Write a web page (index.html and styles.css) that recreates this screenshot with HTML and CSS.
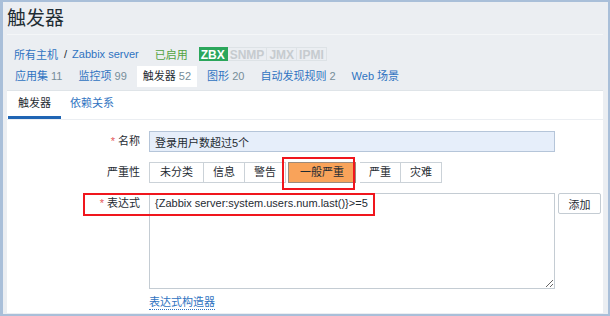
FILE: index.html
```html
<!DOCTYPE html>
<html lang="zh-CN">
<head>
  <meta charset="UTF-8" />
  <title>触发器</title>
  <link rel="stylesheet" href="styles.css">
</head>
<body>
  <div class="frame">
    <div class="header">
      <h1>触发器</h1>
    </div>

    <div class="crumbs">
      <a class="link">所有主机</a>
      <span class="sep">/</span>
      <a class="link">Zabbix server</a>
      <span class="enabled">已启用</span>
      <span class="tags">
        <span class="tag on">ZBX</span><span class="tag">SNMP</span><span class="tag">JMX</span><span class="tag">IPMI</span>
      </span>
    </div>

    <div class="host-tabs">
      <a class="htab"><span class="link">应用集</span> <span class="num">11</span></a>
      <a class="htab"><span class="link">监控项</span> <span class="num">99</span></a>
      <a class="htab active">触发器 <span class="num">52</span></a>
      <a class="htab"><span class="link">图形</span> <span class="num">20</span></a>
      <a class="htab"><span class="link">自动发现规则</span> <span class="num">2</span></a>
      <a class="htab"><span class="link">Web 场景</span></a>
    </div>

    <div class="card">
      <div class="form-tabs">
        <span class="ftab active">触发器</span>
        <span class="ftab">依赖关系</span>
      </div>

      <div class="form">
        <label class="lbl"><span class="req">*</span> 名称</label>
        <div class="ctl"><input class="name" type="text" value="登录用户数超过5个"></div>

        <label class="lbl">严重性</label>
        <div class="ctl">
          <div class="sev">
            <span class="sbtn">未分类</span><span class="sbtn">信息</span><span class="sbtn">警告</span><span class="sbtn sel">一般严重</span><span class="sbtn">严重</span><span class="sbtn">灾难</span>
          </div>
        </div>

        <label class="lbl"><span class="req">*</span> 表达式</label>
        <div class="ctl expr-row">
          <textarea class="expr">{Zabbix server:system.users.num.last()}>=5</textarea>
          <button class="add">添加</button>
        </div>

        <span></span>
        <div class="ctl"><a class="builder">表达式构造器</a></div>
      </div>

      <div class="mark mark-sev"></div>
      <div class="mark mark-expr"></div>
    </div>
  </div>
</body>
</html>
```

FILE: styles.css
```css
body {
  margin: 0;
  font-family: "Liberation Sans", "Noto Sans CJK SC", sans-serif;
  font-size: 11px;
  color: #1f2c33;
}

.frame {
  width: 610px;
  height: 316px;
  box-sizing: border-box;
  border: 2px solid #a9bfd9;
  border-left-width: 3px;
  background: #ebeef2;
  padding: 0 5px 1px 4px;
  display: flex;
  flex-direction: column;
}

.header {
  height: 32px;
  border-bottom: 1px solid #f4f6f8;
}

h1 {
  margin: 0;
  padding-top: 5px;
  font-size: 19px;
  font-weight: normal;
  line-height: 24px;
  color: #1f2c33;
}

.link {
  color: #2f73c1;
  text-decoration: none;
}

.crumbs {
  display: flex;
  align-items: center;
  height: 16px;
  margin: 11px 0 0 7px;
}

.sep {
  margin: 0 5px 0 6px;
  color: #1f2c33;
}

.enabled {
  color: #52a33f;
  margin-left: 16px;
}

.tags {
  display: flex;
  margin-left: 11px;
}

.tag {
  height: 14px;
  line-height: 14px;
  padding: 0 2px;
  font-size: 12px;
  font-weight: bold;
  color: #c6cbcf;
  border: 1px solid #dde2e6;
  border-left: none;
  box-sizing: border-box;
}

.tag.on {
  background: #2ba65b;
  border-color: #2ba65b;
  color: #fff;
}

.host-tabs {
  display: flex;
  gap: 4px;
  margin: 4px 0 0 2px;
  height: 21px;
}

.htab {
  padding: 0 6px;
  line-height: 21px;
  white-space: nowrap;
}

.htab.active {
  background: #fff;
  color: #1f2c33;
}

.num {
  color: #768d99;
}

.card {
  position: relative;
  flex: 1;
  margin-top: 3px;
  background: #fff;
  border-top: 1px solid #dfe4e8;
}

.form-tabs {
  display: flex;
  height: 28px;
  border-bottom: 1px solid #ebeef2;
  padding-left: 1px;
}

.ftab {
  padding: 0 9px;
  line-height: 24px;
  color: #2f73c1;
}

.ftab.active {
  color: #1f2c33;
  border-bottom: 3px solid #1f65b4;
  padding: 0 10px;
}

.form {
  display: grid;
  grid-template-columns: 133px 1fr;
  column-gap: 9px;
  row-gap: 10px;
  padding-top: 11px;
}

.lbl {
  text-align: right;
  line-height: 21px;
}

.req {
  color: #e45959;
}

.ctl {
  display: flex;
}

.name {
  width: 406px;
  height: 21px;
  box-sizing: border-box;
  border: 1px solid #b5c5d9;
  background: #e6eefa;
  padding: 0 5px;
  font: inherit;
  color: #1f2c33;
}

.sev {
  display: flex;
}

.sbtn {
  height: 21px;
  line-height: 19px;
  box-sizing: border-box;
  padding: 0 9px;
  border: 1px solid #cbd2d8;
  border-left: none;
  background: #fff;
}

.sbtn:first-child {
  border-left: 1px solid #cbd2d8;
  padding: 0 10px;
}

.sbtn.sel {
  background: #f9a35a;
  border: 1px solid #9c8a7a;
  margin: 0 4px 0 2px;
  padding: 0 11px;
}

.expr-row {
  gap: 3px;
}

.expr {
  width: 406px;
  height: 96px;
  box-sizing: border-box;
  border: 1px solid #c4ccd3;
  padding: 3px 5px;
  font: inherit;
  color: #1f2c33;
  resize: both;
  margin: 0;
}

.add {
  width: 43px;
  height: 21px;
  border: 1px solid #c4ccd3;
  border-radius: 2px;
  background: #fff;
  font: inherit;
  color: #1f2c33;
  padding: 0;
}

.builder {
  color: #2f73c1;
  border-bottom: 1px dotted #2f73c1;
  margin-top: -4px;
  line-height: 14px;
}

.mark {
  position: absolute;
  border: 2px solid #f0161d;
  box-sizing: border-box;
}

.mark-sev {
  left: 275px;
  top: 66px;
  width: 73px;
  height: 33px;
}

.mark-expr {
  left: 76px;
  top: 102px;
  width: 292px;
  height: 23px;
}
```
